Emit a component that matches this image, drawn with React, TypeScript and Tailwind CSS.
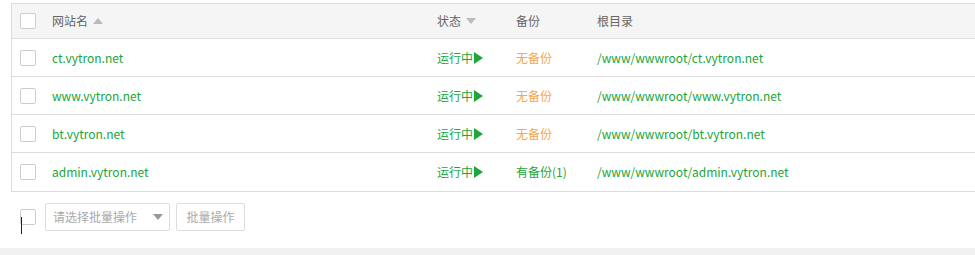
import React from "react";

const font = { fontFamily: '"Microsoft YaHei", "Noto Sans CJK SC", "Noto Sans", sans-serif' };

const rows = [
  { name: "ct.vytron.net", backup: "无备份", has: false },
  { name: "www.vytron.net", backup: "无备份", has: false },
  { name: "bt.vytron.net", backup: "无备份", has: false },
  { name: "admin.vytron.net", backup: "有备份(1)", has: true },
];

function Box() {
  return <div className="w-[16px] h-[16px] border border-[#cccccc] rounded-[2px] bg-white shrink-0" />;
}

export default function App() {
  return (
    <div className="w-[975px] h-[255px] bg-white overflow-hidden text-[12px]" style={font}>
      <div className="pt-[3px] pl-[11px]">
        <div className="border-l border-t border-b border-[#dddddd]">
          <div className="flex items-center h-[35px] bg-[#f5f5f5] border-b border-[#dddddd] text-[#666666]">
            <div className="w-[40px] pl-[8px] flex items-center"><Box /></div>
            <div className="w-[385px] flex items-center">
              网站名
              <span className="ml-[5px] w-0 h-0 border-l-[5px] border-r-[5px] border-b-[6px] border-l-transparent border-r-transparent border-b-[#bbbbbb]" />
            </div>
            <div className="w-[79px] flex items-center">
              状态
              <span className="ml-[5px] w-0 h-0 border-l-[5px] border-r-[5px] border-t-[6px] border-l-transparent border-r-transparent border-t-[#bbbbbb]" />
            </div>
            <div className="w-[81px]">备份</div>
            <div className="flex-1">根目录</div>
          </div>
          {rows.map((r, i) => (
            <div key={r.name} className={`flex items-center h-[38px] ${i < rows.length - 1 ? "border-b border-[#dddddd]" : ""}`}>
              <div className="w-[40px] pl-[8px] flex items-center"><Box /></div>
              <div className="w-[385px] text-[#20a53a]">{r.name}</div>
              <div className="w-[79px] text-[#20a53a] flex items-center">
                运行中
                <span className="ml-[1px] w-0 h-0 border-t-[6px] border-b-[6px] border-l-[9px] border-t-transparent border-b-transparent border-l-[#20a53a]" />
              </div>
              <div className={`w-[81px] ${r.has ? "text-[#20a53a]" : "text-[#f6a64e]"}`}>{r.backup}</div>
              <div className="flex-1 text-[#20a53a]">/www/wwwroot/{r.name}</div>
            </div>
          ))}
        </div>
      </div>
      <div className="flex items-center h-[56px] pl-[20px] pt-[11px] pb-[17px] box-border">
        <div className="relative">
          <Box />
          <div className="absolute left-[1px] top-[8px] w-[1px] h-[17px] bg-[#222222]" />
        </div>
        <div className="ml-[9px] w-[125px] h-[28px] border border-[#dddddd] rounded-[2px] flex items-center justify-between pl-[7px] pr-[6px] text-[#aaaaaa]">
          <span>请选择批量操作</span>
          <span className="w-0 h-0 border-l-[5px] border-r-[5px] border-t-[6px] border-l-transparent border-r-transparent border-t-[#999999]" />
        </div>
        <div className="ml-[6px] w-[69px] h-[28px] border border-[#dddddd] rounded-[2px] flex items-center justify-center text-[#aaaaaa]">
          批量操作
        </div>
      </div>
      <div className="h-[20px] bg-[#f0f0f0]" />
    </div>
  );
}
